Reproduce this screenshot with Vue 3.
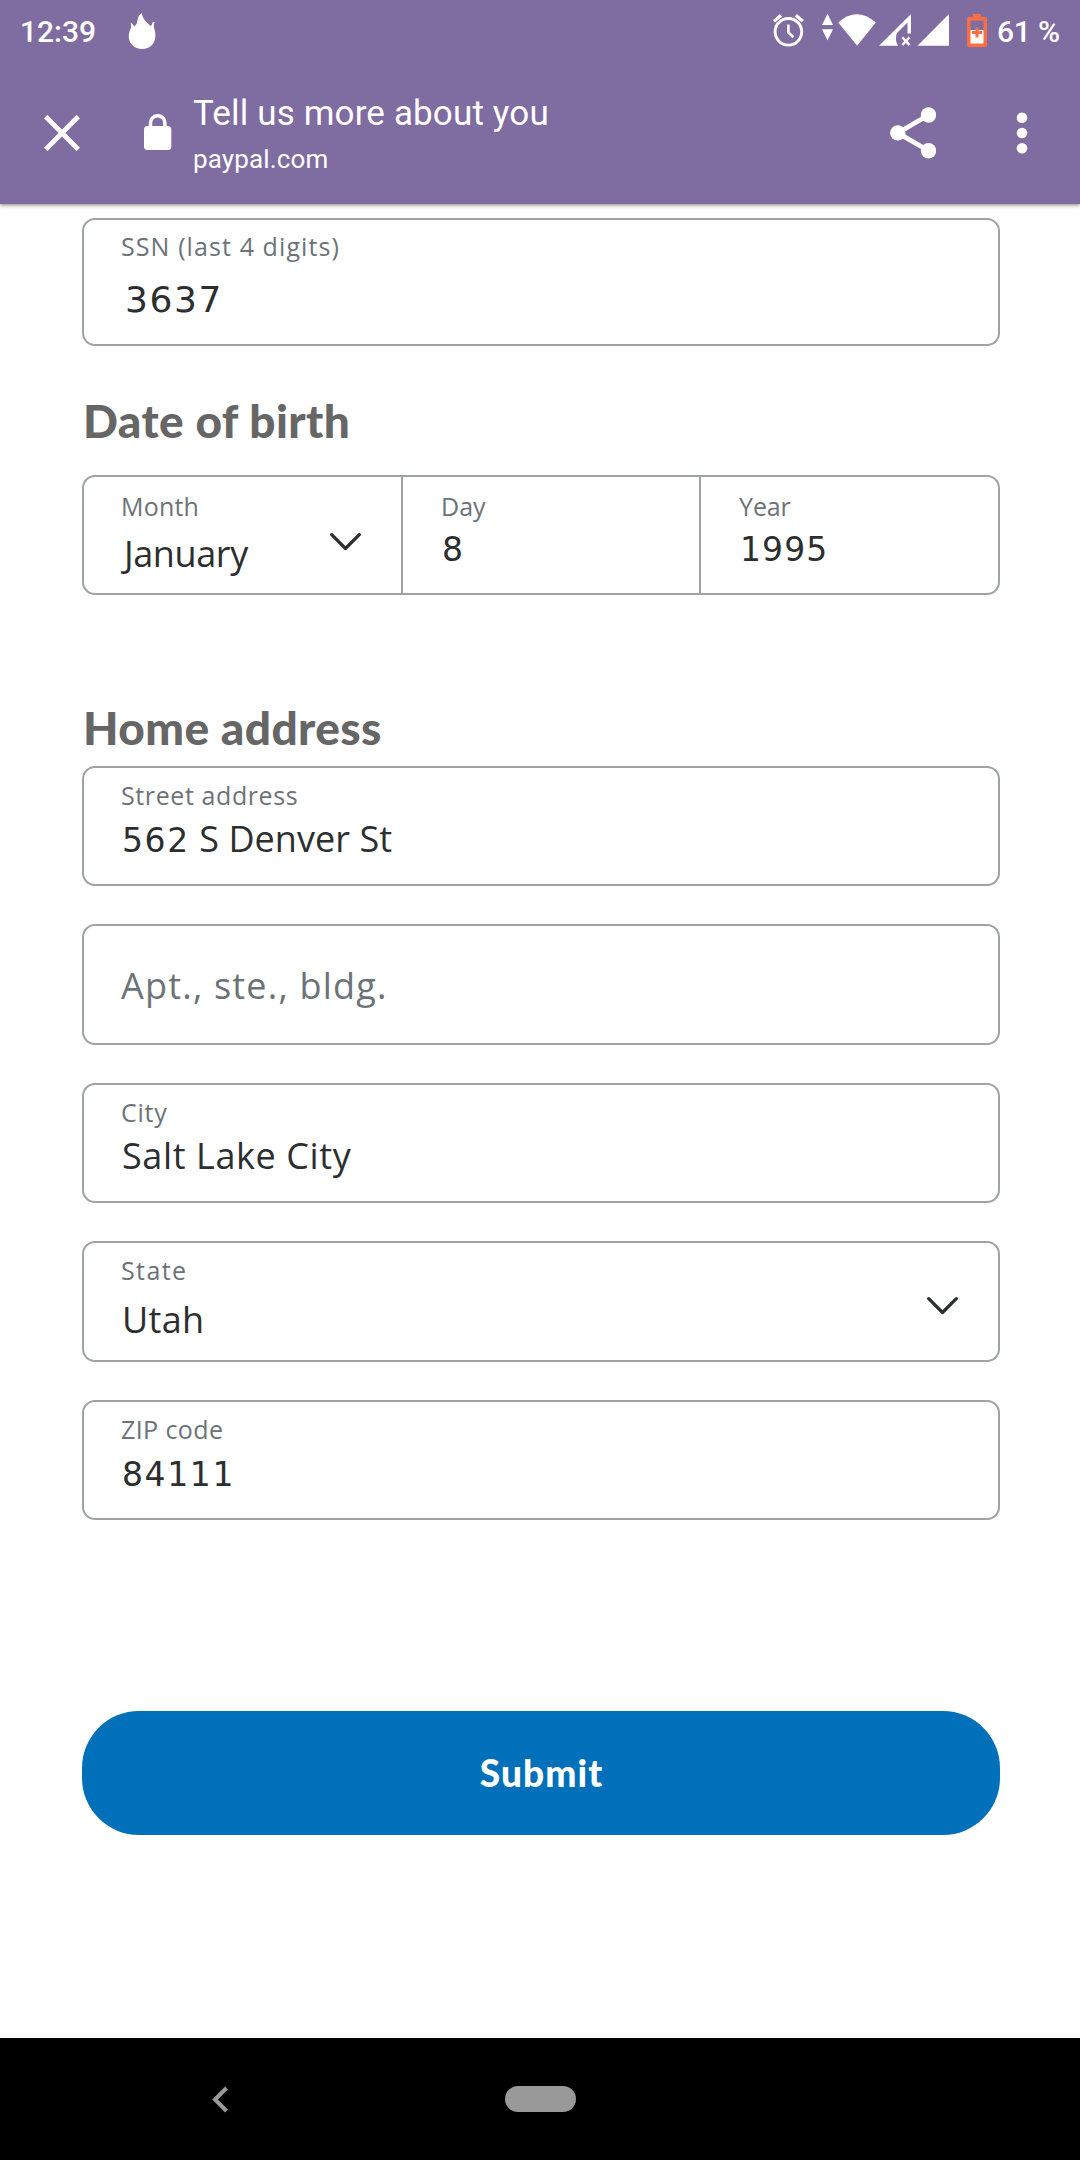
<script setup>
const addressFields = [
  { label: 'Street address', number: '562', value: ' S Denver St', labelTracking: 0.6, tracking: 0.05 },
  { placeholder: 'Apt., ste., bldg.', tracking: 1.2 },
  { label: 'City', value: 'Salt Lake City', labelTracking: 0.75, tracking: 0.6 },
  { label: 'State', value: 'Utah', labelTracking: 1.4, tracking: 0.3, select: true },
  { label: 'ZIP code', number: '84111', labelTracking: 0.4, tracking: 0 }
]
</script>

<template>
  <div class="screen">
    <header class="top">
      <div class="status">
        <span class="clock">12:39</span>
        <svg class="flame" width="28" height="38" viewBox="0 0 28 38">
          <path fill="#fff" d="M13.6 1C14.6 4 15 6.500 17.500 9L22.400 14C24 13.500 24.400 11.500 24.600 9.800L26.800 10.300C25.600 12.200 25.600 14 26.200 16.500C27.200 19 27.600 21.500 27.300 25C26.800 31.800 22 36.900 14.300 36.900C6.200 36.900 1.300 31.800 0.800 25.500C0.600 21.800 1.500 18.500 3 16C3.300 14 3.200 12.300 2.200 10.600C4.800 11.500 4.600 13.400 6.600 14.200C9.700 11.900 9 8 10.200 5.400C11 3.300 12.500 2.200 13.600 1Z" />
        </svg>
        <div class="indicators">
          <svg width="176" height="36" viewBox="773 13 176 36">
            <g fill="none" stroke="#fff">
              <circle cx="788.4" cy="31.800" r="13.300" stroke-width="2.900" />
              <path stroke-width="2.700" d="M788.400 24.500V32.500L793.400 37.300" />
              <path stroke-width="3.400" d="M774 21.300L781 15.300M795.800 15.300L802.800 21.300" />
            </g>
            <g fill="#fff">
              <path d="M827.500 13.800L833 25H822ZM827.500 40.500L833 29.200H822Z" />
              <path d="M838.200 22.500Q856.800 6 875.800 22.500L857.200 45.700Z" />
              <path fill-rule="evenodd" d="M879 45.700L911 14V33.500H907.500V22.500L897.500 32.500Q895.700 34.500 896 40Q896.200 43.500 898.300 45.700Z" />
              <path d="M917.500 45.700L949 14V45.700Z" />
            </g>
            <path stroke="#fff" stroke-width="2.500" d="M902.300 37.300L909.500 45M909.500 37.300L902.300 45" />
          </svg>
          <svg class="battery" width="20" height="33" viewBox="0 0 20 33">
            <path fill="#ff6e40" d="M6 0H14V3H18Q20 3 20 5V31Q20 33 18 33H2Q0 33 0 31V5Q0 3 2 3H6Z" />
            <path fill="#7f6ca1" d="M3.500 6.500H16.500V17H3.500Z" />
            <path fill="#fff" d="M3.500 16H16.500V29.500H3.500Z" />
            <path stroke="#ff6e40" stroke-width="3" d="M5 18.500H15M10 13.500V23.500" />
          </svg>
          <span class="percent">61 %</span>
        </div>
      </div>
      <div class="toolbar">
        <svg class="close" width="36" height="36" viewBox="0 0 36 36"><path stroke="#fff" stroke-width="4.800" d="M1.700 1.500L34.300 34.500M34.300 1.500L1.700 34.500" /></svg>
        <svg class="lock" width="28" height="36" viewBox="0 0 28 36">
          <rect x="0" y="12" width="27.300" height="24" rx="3.500" fill="#fff" />
          <path fill="none" stroke="#fff" stroke-width="3.500" d="M6.500 14V8.900A7.200 7.200 0 0 1 20.900 8.900V14" />
        </svg>
        <div class="title">
          <div class="page-name">Tell us more about you</div>
          <div class="domain">paypal.com</div>
        </div>
        <svg class="share" width="46" height="52" viewBox="889.500 106.500 46 52">
          <path fill="none" stroke="#fff" stroke-width="4.800" d="M928 114.500L897.300 132.400L928 150.300" />
          <g fill="#fff"><circle cx="897.300" cy="132.400" r="7.700" /><circle cx="928" cy="114.500" r="7.700" /><circle cx="928" cy="150.300" r="7.700" /></g>
        </svg>
        <svg class="more" width="12" height="42" viewBox="0 0 12 42"><g fill="#fff"><circle cx="6" cy="5.700" r="5.300" /><circle cx="6" cy="21" r="5.300" /><circle cx="6" cy="36.300" r="5.300" /></g></svg>
      </div>
    </header>

    <main class="form">
      <div class="field ssn">
        <div class="label">SSN (last 4 digits)</div>
        <div class="value"><span class="number">3637</span></div>
      </div>

      <h2 class="heading birth">Date of birth</h2>
      <div class="date">
        <div class="cell month">
          <div class="texts">
            <div class="label">Month</div>
            <div class="value">January</div>
          </div>
          <svg class="chevron" width="31" height="18" viewBox="0 0 31 18"><path d="M1.700 1.700L15.500 15.500L29.300 1.700" /></svg>
        </div>
        <div class="cell day">
          <div class="label">Day</div>
          <div class="value"><span class="number">8</span></div>
        </div>
        <div class="cell year">
          <div class="label">Year</div>
          <div class="value"><span class="number">1995</span></div>
        </div>
      </div>

      <h2 class="heading home">Home address</h2>
      <div class="address">
        <div v-for="(f, i) in addressFields" :key="i" class="field" :class="{ select: f.select, empty: f.placeholder }">
          <div class="texts">
            <div v-if="f.label" class="label" :style="{ letterSpacing: f.labelTracking + 'px' }">{{ f.label }}</div>
            <div v-if="f.placeholder" class="placeholder" :style="{ letterSpacing: f.tracking + 'px' }">{{ f.placeholder }}</div>
            <div v-else class="value" :style="{ letterSpacing: f.tracking + 'px' }"><span v-if="f.number" class="number">{{ f.number }}</span>{{ f.value }}</div>
          </div>
          <svg v-if="f.select" class="chevron" width="31" height="18" viewBox="0 0 31 18"><path d="M1.700 1.700L15.500 15.500L29.300 1.700" /></svg>
        </div>
      </div>

      <button class="submit" type="button">Submit</button>
    </main>

    <nav class="navbar">
      <svg class="back" width="17" height="27" viewBox="0 0 17 27"><path fill="none" stroke="#999" stroke-width="4" d="M14.500 2L3 13.500L14.500 25" /></svg>
      <div class="pill"></div>
    </nav>
  </div>
</template>

<style>
body { margin: 0; background: #fff; }
</style>

<style scoped>
* { box-sizing: border-box; }
svg { display: block; flex: none; }
.screen {
  display: flex;
  flex-direction: column;
  width: 1080px;
  height: 2160px;
  overflow: hidden;
  background: #fff;
  font-family: "Open Sans", sans-serif;
  white-space: pre;
}

.top {
  flex: none;
  height: 204px;
  background: #7f6ca1;
  color: #fff;
  font-family: Roboto, sans-serif;
  box-shadow: 0 1px 4px rgba(0, 0, 0, 0.5);
}
.status { display: flex; height: 64px; padding: 0 20px; font-size: 30px; font-weight: 500; }
.clock { width: 108px; line-height: 63px; }
.flame { margin-top: 12px; }
.indicators { display: flex; margin-left: auto; width: 287px; }
.indicators > svg { margin-top: 13px; }
.indicators > .battery { margin: 14px 0 0 18px; }
.percent { margin-left: 10px; line-height: 63px; letter-spacing: -0.2px; }
.toolbar { display: flex; height: 140px; }
.close { margin: 51px 0 0 43.5px; }
.lock { margin: 50px 0 0 64.5px; }
.title { flex: none; width: 675px; margin: 28px 0 0 21px; }
.page-name { height: 44px; font-size: 35px; line-height: 44px; letter-spacing: 0.15px; }
.domain { margin-top: 6px; font-size: 26px; line-height: 34px; letter-spacing: 0.15px; }
.share { margin: 42.5px 0 0 21.5px; }
.more { margin: 47.5px 0 0 80.5px; }

.form { flex: 1; display: flex; flex-direction: column; padding: 14px 80px 0 82px; border-bottom: 4px solid #fafafa; }
.field { display: flex; flex: none; height: 120px; padding: 12px 37px 0; border: 2px solid #9da3a6; border-radius: 13px; }
.texts { flex: 1; }
.label { height: 30px; color: #6c7378; font-size: 25px; line-height: 30px; }
.value { height: 44px; margin: 7px 0 0 1px; color: #2c2e2f; font-size: 36px; line-height: 44px; }
.number { font-family: "DejaVu Sans", sans-serif; font-size: 33px; line-height: 0; letter-spacing: 1.6px; }
.chevron path { fill: none; stroke: #2c2e2f; stroke-width: 3.2; stroke-linecap: round; stroke-linejoin: round; }

.ssn { display: block; height: 128px; padding-top: 11px; }
.ssn .label { letter-spacing: 1.1px; }
.ssn .value { margin: 16px 0 0 4px; }
.ssn .number { font-size: 36px; }

.heading { height: 60px; margin: 0; padding-left: 1px; color: #666; font: 900 46px/60px Lato, sans-serif; letter-spacing: 0.4px; }
.birth { margin-top: 45px; }
.date { display: flex; flex: none; height: 120px; margin-top: 24px; border: 2px solid #9da3a6; border-radius: 13px; }
.cell { padding: 14px 38px 0; }
.cell + .cell { border-left: 2px solid #9da3a6; }
.cell .value { margin: 5px 0 0 1px; }
.month { display: flex; width: 317px; padding-left: 37px; }
.month .label { letter-spacing: 0.2px; }
.month .value { margin: 11px 0 0 3px; letter-spacing: -0.4px; }
.month .chevron { margin: 42px 2px 0 0; }
.day { width: 298px; }
.year { flex: 1; }
.year .label { letter-spacing: -0.1px; }
.year .number { letter-spacing: 1.1px; }

.home { margin-top: 103px; }
.address { display: flex; flex-direction: column; gap: 38px; margin-top: 8px; }
.empty { height: 121px; padding-top: 38px; }
.placeholder { color: #6c7378; font-size: 36px; line-height: 44px; }
.select { height: 121px; }
.select .value { margin-top: 13px; }
.select .chevron { margin: 42px 3px 0 0; }

.submit {
  flex: none;
  height: 124px;
  margin-top: 191px;
  padding: 0 0 0 1px;
  border: 0;
  border-radius: 57px;
  background: #0070ba;
  color: #fff;
  font: 900 37px/124px Lato, sans-serif;
  letter-spacing: 1.1px;
}

.navbar { display: flex; flex: none; height: 122px; background: #000; }
.back { margin: 48px 0 0 212px; }
.pill { width: 71px; height: 26px; margin: 48px 0 0 276px; border-radius: 13px; background: #999; }
</style>
